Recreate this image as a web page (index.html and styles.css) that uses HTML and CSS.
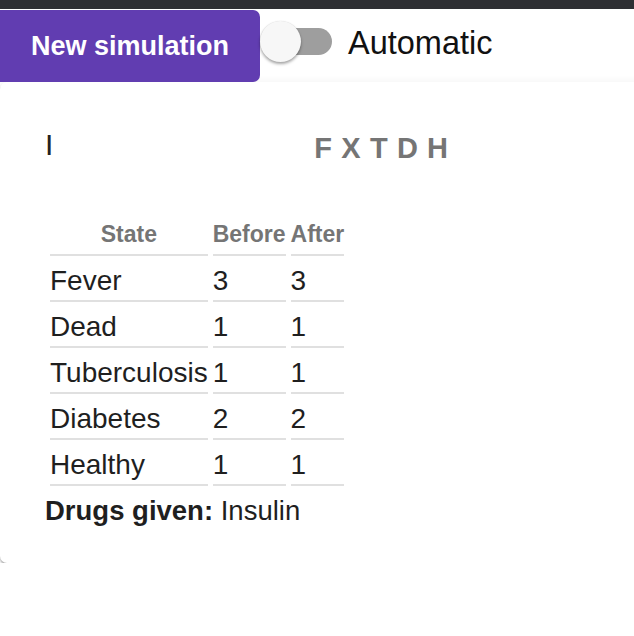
FILE: index.html
```html
<!DOCTYPE html>
<html lang="en">
<head>
<meta charset="utf-8">
<title>Simulation</title>
<link rel="stylesheet" href="styles.css">
</head>
<body>
<div class="topbar"></div>
<header class="toolbar">
  <button class="btn-primary" type="button">New simulation</button>
  <span class="switch" role="switch" aria-checked="false">
    <span class="switch-track"></span>
    <span class="switch-thumb"></span>
  </span>
  <span class="switch-label">Automatic</span>
</header>
<main class="card">
  <div class="card-head">
    <span class="patient">I</span>
    <span class="sequence">F X T D H</span>
  </div>
  <table class="states">
    <thead>
      <tr><th>State</th><th>Before</th><th>After</th></tr>
    </thead>
    <tbody>
      <tr><td>Fever</td><td>3</td><td>3</td></tr>
      <tr><td>Dead</td><td>1</td><td>1</td></tr>
      <tr><td>Tuberculosis</td><td>1</td><td>1</td></tr>
      <tr><td>Diabetes</td><td>2</td><td>2</td></tr>
      <tr><td>Healthy</td><td>1</td><td>1</td></tr>
    </tbody>
  </table>
  <p class="drugs"><strong>Drugs given:</strong> Insulin</p>
</main>
</body>
</html>
```
FILE: styles.css
```css
html, body {
  margin: 0;
  padding: 0;
  background: #ffffff;
  overflow: hidden;
}

body {
  font-family: "Liberation Sans", Arial, Helvetica, sans-serif;
  color: #1f1f1f;
}

.topbar {
  height: 9px;
  background: #2e2f33;
}

.toolbar {
  display: flex;
  align-items: flex-start;
  margin-top: 1px;
  height: 72px;
}

.btn-primary {
  width: 260px;
  height: 72px;
  border: none;
  border-radius: 0 7px 7px 0;
  background: #613db1;
  color: #ffffff;
  font-family: "Liberation Sans", Arial, sans-serif;
  font-weight: bold;
  font-size: 27px;
  padding: 0;
  margin: 0;
}

.switch {
  position: relative;
  display: block;
  width: 72px;
  height: 41px;
  margin-top: 11px;
}

.switch-track {
  position: absolute;
  left: 8px;
  right: 0;
  top: 7px;
  height: 27px;
  border-radius: 14px;
  background: #9e9e9e;
}

.switch-thumb {
  position: absolute;
  left: 0;
  top: 0;
  width: 41px;
  height: 41px;
  border-radius: 50%;
  background: #f7f7f7;
  box-shadow: 0 2px 3px rgba(0, 0, 0, 0.35), 0 0 1px rgba(0, 0, 0, 0.15);
}

.switch-label {
  margin-left: 16px;
  margin-top: 15px;
  font-size: 32.5px;
  line-height: 37px;
  color: #111;
}

.card {
  display: block;
  width: calc(100% + 20px);
  background: #ffffff;
  border-radius: 7px;
  box-shadow: 0 2px 2px rgba(0, 0, 0, 0.3), 0 0 8px rgba(0, 0, 0, 0.06);
  padding: 46px 0 37px 45px;
  box-sizing: border-box;
}

.card-head {
  display: flex;
  align-items: flex-start;
}

.patient {
  font-size: 30px;
  line-height: 34px;
  color: #222;
}

.sequence {
  margin-left: 261px;
  margin-top: 3px;
  font-size: 29px;
  line-height: 34px;
  font-weight: bold;
  letter-spacing: 0.6px;
  color: #757575;
}

.states {
  margin-top: 53px;
  border-collapse: separate;
  border-spacing: 5px 3px;
}

.states th {
  font-size: 23px;
  line-height: 26px;
  font-weight: bold;
  color: #757575;
  padding: 0 0 7px 0;
  border-bottom: 2px solid #e0e0e0;
  text-align: center;
}

.states td {
  font-size: 28px;
  line-height: 31px;
  color: #1f1f1f;
  padding: 6px 0 4px 0;
  border-bottom: 2px solid #e0e0e0;
  text-align: left;
}

.drugs {
  margin: 6px 0 0 0;
  font-size: 27.5px;
  line-height: 31px;
  color: #1f1f1f;
}

.drugs strong {
  font-weight: bold;
}
```
